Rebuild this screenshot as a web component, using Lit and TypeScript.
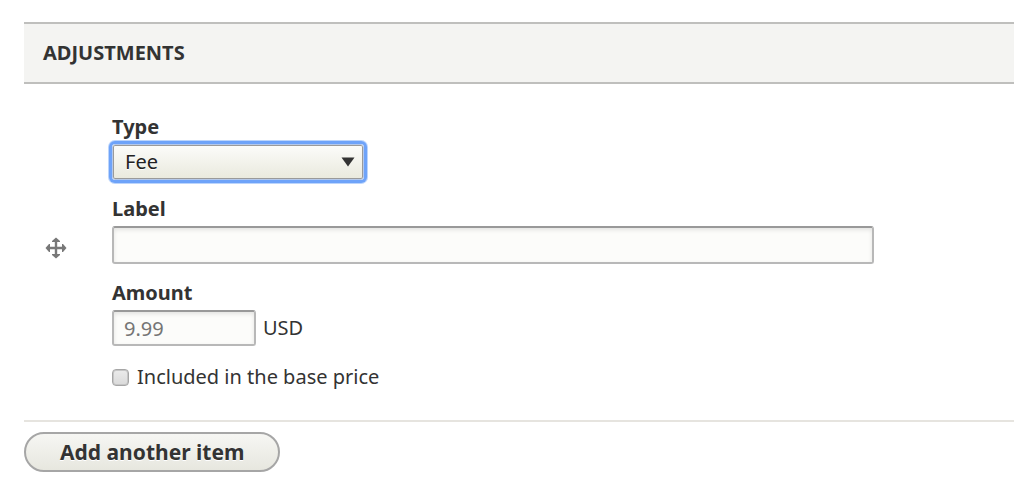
import { LitElement, html, css } from "lit";
import { customElement, state } from "lit/decorators.js";

@customElement("app-root")
export class AdjustmentsForm extends LitElement {
  @state() private types = ["Fee", "Tax", "Promotion"];

  static styles = css`
    :host {
      display: block;
      box-sizing: border-box;
      padding: 22px 0 30px 24px;
      background: #fff;
      color: #333;
      font: 20px/24px "Noto Sans", "Open Sans", sans-serif;
    }
    *, *::before, *::after { box-sizing: border-box; }
    .heading {
      margin: 0;
      padding: 17px 19px;
      border-top: 2px solid #bfbfbd;
      border-bottom: 2px solid #bfbfbd;
      background: #f4f4f2;
      font-size: 20px;
      font-weight: 700;
      line-height: 24px;
      text-transform: uppercase;
    }
    .row {
      display: grid;
      grid-template-columns: 64px minmax(0, 1fr);
      column-gap: 24px;
      align-items: center;
      padding: 23px 0 31px;
      border-bottom: 2px solid #e6e4df;
    }
    .handle {
      display: flex;
      justify-content: center;
      padding: 0;
      border: 0;
      background: none;
      color: #787878;
      cursor: move;
    }
    .fields {
      display: flex;
      flex-direction: column;
      align-items: flex-start;
      padding: 8px 140px 0 0;
    }
    .label {
      font-weight: 700;
      line-height: 24px;
      margin-bottom: 5px;
    }
    .picker {
      display: grid;
      width: 252px;
      margin-bottom: 17px;
      align-items: center;
    }
    .picker > * { grid-area: 1 / 1; }
    .select {
      appearance: none;
      width: 100%;
      height: 36px;
      padding: 0 36px 0 12px;
      border: 1px solid #b4c8ea;
      border-radius: 3px;
      outline: none;
      background: linear-gradient(#fcfcfa, #e9e9dd);
      box-shadow: inset 0 0 0 1px #9a9a9a, 0 0 0 3px #6ea3f9, 0 0 0 4px #bcd5fc;
      color: #222;
      font: inherit;
      text-shadow: 0 1px #fff;
    }
    .arrow {
      justify-self: end;
      margin-right: 9px;
      color: #333;
      pointer-events: none;
    }
    .input {
      height: 38px;
      padding: 0 10px;
      border: 2px solid #b8b8b8;
      border-top-color: #999;
      border-radius: 3px;
      background: #fcfcfa;
      box-shadow: inset 0 2px 4px rgba(0, 0, 0, 0.1);
      color: #333;
      font: inherit;
    }
    .input::placeholder { color: #757575; opacity: 1; }
    .wide { width: 100%; margin-bottom: 17px; }
    .price { display: flex; align-items: center; gap: 7px; margin-bottom: 19px; }
    .short { width: 144px; height: 36px; }
    .check { display: flex; align-items: center; gap: 8px; line-height: 24px; }
    .box {
      appearance: none;
      width: 17px;
      height: 17px;
      margin: 0;
      border: 1px solid #a6a6a6;
      border-radius: 4px;
      background: linear-gradient(#ebebeb, #dadada);
      box-shadow: inset 0 0 0 1px #c6c6c6;
    }
    .box:checked { background: #777; }
    .add {
      height: 40px;
      margin-top: 10px;
      padding: 0 34px;
      border: 2px solid #a6a6a6;
      border-radius: 20px;
      background: linear-gradient(#f6f6f3, #e7e7df);
      color: #333;
      font: inherit;
      font-size: 21px;
      font-weight: 700;
      text-shadow: 0 1px #fff;
      cursor: pointer;
    }
  `;

  render() {
    return html`
      <h4 class="heading">Adjustments</h4>
      <div class="row">
        <button class="handle" type="button" aria-label="Drag to re-order">
          <svg width="22" height="22" viewBox="0 0 22 22" fill="currentColor" aria-hidden="true">
            <path d="M11 0.5L15 4V5H12.2V9.8H17V7H18L21.5 11L18 15H17V12.2H12.2V17H15V18L11 21.5L7 18V17H9.8V12.2H5V15H4L0.5 11L4 7H5V9.8H9.8V5H7V4Z" />
          </svg>
        </button>
        <div class="fields">
          <label class="label" for="type">Type</label>
          <div class="picker">
            <select class="select" id="type">
              ${this.types.map((t) => html`<option>${t}</option>`)}
            </select>
            <svg class="arrow" width="14" height="10" viewBox="0 0 14 10" aria-hidden="true">
              <path d="M0.5 0.5H13.5L7 9.5Z" fill="currentColor" />
            </svg>
          </div>
          <label class="label" for="label">Label</label>
          <input class="input wide" id="label" type="text" />
          <label class="label" for="amount">Amount</label>
          <div class="price">
            <input class="input short" id="amount" type="text" placeholder="9.99" />
            <span>USD</span>
          </div>
          <label class="check">
            <input class="box" type="checkbox" />
            <span>Included in the base price</span>
          </label>
        </div>
      </div>
      <button class="add" type="button">Add another item</button>
    `;
  }
}
